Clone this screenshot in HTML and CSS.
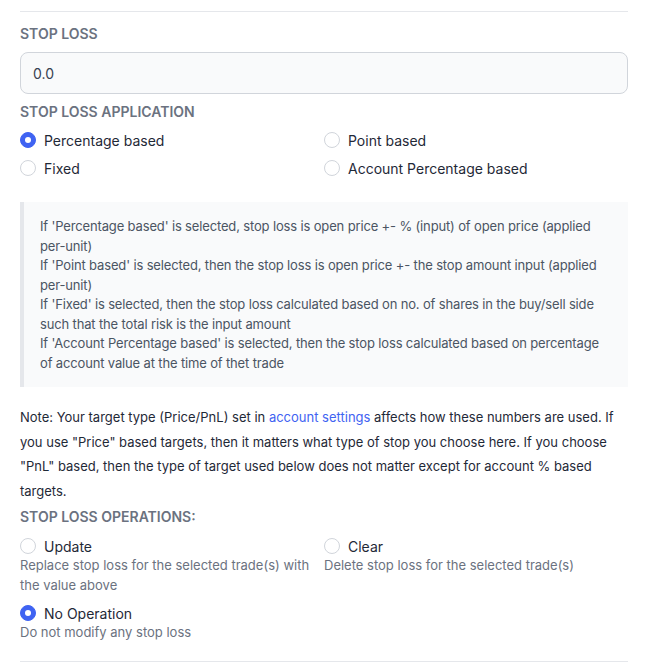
FILE: index.html
```html
<!DOCTYPE html>
<html>
<head>
<meta charset="utf-8">
<link rel="stylesheet" href="styles.css">
</head>
<body>
<div class="panel">
  <hr class="divider top">
  <div class="label first">STOP LOSS</div>
  <div class="input">0.0</div>
  <div class="label">STOP LOSS APPLICATION</div>
  <div class="grid options">
    <div class="opt"><span class="radio checked"></span><span class="opt-label">Percentage based</span></div>
    <div class="opt"><span class="radio"></span><span class="opt-label">Point based</span></div>
    <div class="opt"><span class="radio"></span><span class="opt-label">Fixed</span></div>
    <div class="opt"><span class="radio"></span><span class="opt-label">Account Percentage based</span></div>
  </div>
  <div class="info">
    If 'Percentage based' is selected, stop loss is open price +- % (input) of open price (applied per-unit)<br>
    If 'Point based' is selected, then the stop loss is open price +- the stop amount input (applied per-unit)<br>
    If 'Fixed' is selected, then the stop loss calculated based on no. of shares in the buy/sell side such that the total risk is the input amount<br>
    If 'Account Percentage based' is selected, then the stop loss calculated based on percentage of account value at the time of thet trade
  </div>
  <p class="note">Note: Your target type (Price/PnL) set in <a class="link">account settings</a> affects how these numbers are used. If you use "Price" based targets, then it matters what type of stop you choose here. If you choose "PnL" based, then the type of target used below does not matter except for account % based targets.</p>
  <div class="label ops">STOP LOSS OPERATIONS:</div>
  <div class="grid ops-grid">
    <div class="op">
      <div class="opt"><span class="radio"></span><span class="opt-label">Update</span></div>
      <div class="desc">Replace stop loss for the selected trade(s) with the value above</div>
    </div>
    <div class="op">
      <div class="opt"><span class="radio"></span><span class="opt-label">Clear</span></div>
      <div class="desc">Delete stop loss for the selected trade(s)</div>
    </div>
    <div class="op">
      <div class="opt"><span class="radio checked"></span><span class="opt-label">No Operation</span></div>
      <div class="desc">Do not modify any stop loss</div>
    </div>
  </div>
  <hr class="divider bottom">
</div>
</body>
</html>
```

FILE: styles.css
```css
* { box-sizing: border-box; }
html, body { margin: 0; padding: 0; background: #fff; }
body {
  font-family: Inter, "Noto Sans", "Liberation Sans", sans-serif;
  color: #1f2937;
}
.panel {
  padding: 0 18px 0 20px;
  display: flex;
  flex-direction: column;
}
.divider {
  border: 0;
  border-top: 1px solid #e5e7eb;
  margin: 0;
  width: 100%;
}
.divider.top { margin-top: 11px; }
.divider.bottom { margin-top: 18px; }
.label {
  font-size: 14px;
  line-height: 20px;
  font-weight: 600;
  color: #6b7280;
  margin-top: 8px;
}
.label.first { margin-top: 12px; }
.input {
  margin-top: 8px;
  height: 42px;
  border: 1px solid #d1d5db;
  border-radius: 8px;
  background: #f9fafb;
  padding: 0 12px;
  display: flex;
  align-items: center;
  font-size: 14px;
  color: #374151;
}
.grid {
  display: grid;
  grid-template-columns: 304px 1fr;
}
.options {
  margin-top: 8px;
  row-gap: 8px;
}
.opt {
  display: flex;
  align-items: center;
  gap: 8px;
  height: 20px;
}
.radio {
  width: 16px;
  height: 16px;
  border-radius: 50%;
  border: 1px solid #d1d5db;
  background: #fff;
  flex: none;
  display: flex;
  align-items: center;
  justify-content: center;
}
.radio.checked {
  background: #3f63f2;
  border-color: #3f63f2;
}
.radio.checked::after {
  content: "";
  width: 6px;
  height: 6px;
  border-radius: 50%;
  background: #fff;
}
.opt-label {
  font-size: 14px;
  color: #1f2937;
}
.info {
  margin-top: 24px;
  background: #f9fafb;
  border-left: 4px solid #e5e7eb;
  padding: 15px 16px 14px 16px;
  font-size: 13px;
  line-height: 19.5px;
  letter-spacing: -0.15px;
  color: #4b5563;
}
.note {
  margin: 18px 0 0 0;
  font-size: 13px;
  line-height: 24.6px;
  color: #1f2937;
}
.link { color: #3f63f2; text-decoration: none; }
.label.ops { margin-top: 4px; }
.ops-grid {
  margin-top: 9px;
  row-gap: 8px;
}
.desc {
  font-size: 13px;
  line-height: 19.5px;
  color: #6b7280;
  padding-right: 8px;
}
```
